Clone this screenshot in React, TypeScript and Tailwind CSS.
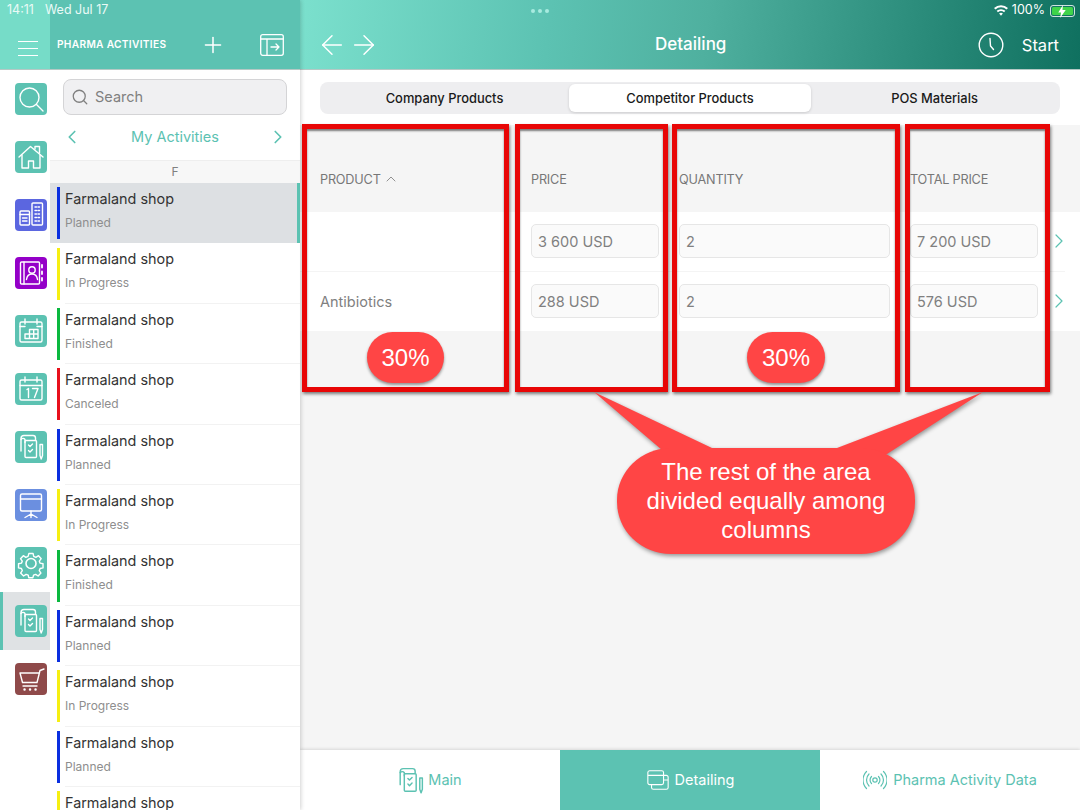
import type { ReactNode } from "react";
import { ChevronLeft, ChevronRight, ChevronUp, Plus, Search, ArrowLeft, ArrowRight } from "lucide-react";

const sans = "font-['Inter','Noto_Sans',sans-serif]";

function Glyph({ children, className = "w-8 h-8" }: { children: ReactNode; className?: string }) {
  return (
    <svg viewBox="0 0 32 32" fill="none" stroke="currentColor" strokeWidth="1.4" strokeLinecap="round" strokeLinejoin="round" className={className}>
      {children}
    </svg>
  );
}

const ClipboardGlyph = () => (
  <>
    <path d="M6 20V7.5C6 5.5 7.2 4.5 9 4.5h9c1.5 0 2.5 1 2.5 2.5v2" />
    <path d="M6 8.5c1-1.5 3-1.5 4 0v3" />
    <rect x="10" y="9.5" width="11.5" height="17" rx="1" />
    <path d="M13.5 14l1.5 1.5 2.5-2.5M13.5 19.5l1.5 1.5 2.5-2.5" />
    <path d="M25 13.5h2.5v11L26.2 28 25 24.5z" />
  </>
);

const railIcons = [
  {
    bg: "bg-[#5cc2b2]",
    glyph: (
      <>
        <circle cx="14.5" cy="14.5" r="9.5" />
        <path d="M21.5 21.5l6.5 6.5" />
      </>
    ),
  },
  {
    bg: "bg-[#5cc2b2]",
    glyph: (
      <>
        <path d="M4 16L15.5 5.5 28 16" />
        <path d="M7 14v13h6.5v-7h5v7H25V14" />
        <path d="M20 8V5.5h4.5V12" />
      </>
    ),
  },
  {
    bg: "bg-[#5b66e0]",
    glyph: (
      <>
        <rect x="5" y="12" width="9.5" height="14" rx="1" />
        <path d="M5 15.5h9.5M7.5 19h4.5M7.5 22h4.5" />
        <rect x="17" y="4" width="10.5" height="22" rx="1" />
        <path d="M20 8h4.5M20 11.5h4.5M20 15h4.5M20 18.5h4.5M20 22h4.5" strokeDasharray="1.5 1.5" />
      </>
    ),
  },
  {
    bg: "bg-[#9400c8]",
    glyph: (
      <>
        <rect x="5.5" y="5" width="19" height="22" rx="1" />
        <path d="M9 5v22" />
        <circle cx="17" cy="13" r="3.2" />
        <path d="M11.5 22.5c.5-4 2.5-5.5 5.5-5.5s5 1.5 5.5 5.5" />
        <path d="M27 8v2.5M27 14.5V17M27 21v2.5" strokeWidth="1.8" />
      </>
    ),
  },
  {
    bg: "bg-[#5cc2b2]",
    glyph: (
      <>
        <rect x="5" y="7" width="22" height="20" rx="1.5" />
        <path d="M10 4v5M22 4v5M5 11.5h5M22 11.5h5" />
        <path d="M10 23.5h13v-9h-8.5v4.5H10zM14.5 19H23M14.5 19v4.5M18.7 14.5v9" />
      </>
    ),
  },
  {
    bg: "bg-[#5cc2b2]",
    glyph: (
      <>
        <rect x="5" y="7" width="22" height="20" rx="1.5" />
        <path d="M10 4v5M22 4v5M5 12.5h22" />
        <path d="M12 16.5l1.5-1v9" />
        <path d="M17.5 15.5H23l-3.5 9" />
      </>
    ),
  },
  { bg: "bg-[#5cc2b2]", glyph: <ClipboardGlyph /> },
  {
    bg: "bg-[#6b8fe0]",
    glyph: (
      <>
        <rect x="5.5" y="5" width="21" height="17" rx="1.5" />
        <path d="M5.5 10h21M16 22v3M16 25l-6 3.5M16 25l6 3.5M16 25v3.5" />
      </>
    ),
  },
  {
    bg: "bg-[#5cc2b2]",
    glyph: (
      <>
        <path d="M13.5 4.5h5l.8 3.6 2.6 1.1 3.2-2 3.2 3.6-2.2 3 .9 2.4 3.5.8v4.9l-3.5.8-1 2.5 2 3-3.4 3.5-3-2-2.5 1-.8 3h-5l-.6-3-2.6-1-3 2-3.6-3.5 2-3-1-2.5-3.5-.8V17l3.5-.8 1-2.4-2.1-3 3.4-3.6 3 2 2.7-1.1z" transform="translate(2.7 2.7) scale(.83)" strokeWidth="1.7" />
        <circle cx="16" cy="16.5" r="5" strokeWidth="1.6" />
      </>
    ),
  },
  { bg: "bg-[#5cc2b2]", glyph: <ClipboardGlyph />, active: true },
  {
    bg: "bg-[#8f4a4a]",
    glyph: (
      <>
        <path d="M5 10h19M5 10l2.5 9.5h14.5L25 7.5 29 6" />
        <path d="M8 23h14" />
        <path d="M9.5 26.5h.1M20.5 26.5h.1M15 26.5h.1" strokeWidth="2.4" />
      </>
    ),
  },
];

const activities = [
  { status: "Planned", bar: "bg-[#0a2fe0]" },
  { status: "In Progress", bar: "bg-[#f6ef12]" },
  { status: "Finished", bar: "bg-[#0ab83f]" },
  { status: "Canceled", bar: "bg-[#e8101c]" },
  { status: "Planned", bar: "bg-[#0a2fe0]" },
  { status: "In Progress", bar: "bg-[#f6ef12]" },
  { status: "Finished", bar: "bg-[#0ab83f]" },
  { status: "Planned", bar: "bg-[#0a2fe0]" },
  { status: "In Progress", bar: "bg-[#f6ef12]" },
  { status: "Planned", bar: "bg-[#0a2fe0]" },
  { status: "", bar: "bg-[#f6ef12]" },
];

const rows = [
  { product: "", price: "3 600 USD", qty: "2", total: "7 200 USD" },
  { product: "Antibiotics", price: "288 USD", qty: "2", total: "576 USD" },
];

function ValueBox({ value }: { value: string }) {
  return (
    <div className="h-[34px] flex items-center px-[6px] pt-[1px] rounded-[5px] border border-[#e6e6e6] bg-[#fafafa] text-[14.5px] text-[#808080]">
      {value}
    </div>
  );
}

export default function App() {
  return (
    <div className={`relative w-[1080px] h-[810px] overflow-hidden flex bg-white ${sans}`}>
      {/* Sidebar */}
      <aside className="relative z-10 w-[300px] shrink-0 flex flex-col shadow-[1px_0_4px_rgba(0,0,0,0.18)]">
        <header className="h-[70px] shrink-0 flex flex-col text-white border-b border-[#b5c9c5] bg-[linear-gradient(90deg,#76dcc8_50px,#5cc2b2_50px)]">
          <div className="h-[21px] flex items-center gap-[11px] pl-[7px] text-[12.5px] text-[#eafaf6]">
            <span>14:11</span>
            <span>Wed Jul 17</span>
          </div>
          <div className="flex-1 flex items-center">
            <div className="w-[57px] mt-[6px] pl-[18px] flex flex-col gap-[6px]">
              <span className="w-[20px] h-px bg-white" />
              <span className="w-[20px] h-px bg-white" />
              <span className="w-[20px] h-px bg-white" />
            </div>
            <span className="w-[143px] text-[10.2px] font-semibold tracking-[0.3px] whitespace-nowrap">PHARMA ACTIVITIES</span>
            <Plus className="w-[26px] h-[26px]" strokeWidth={1.4} />
            <svg viewBox="0 0 24 22" fill="none" stroke="currentColor" strokeWidth="1.3" strokeLinejoin="round" strokeLinecap="round" className="ml-[34px] w-[24px] h-[22px]">
              <rect x="0.7" y="0.7" width="22.6" height="20.6" rx="2" />
              <path d="M0.7 5h22.6M7 5v16" />
              <path d="M11 13h8M16 10l3 3-3 3" />
            </svg>
          </div>
        </header>

        <div className="flex-1 flex min-h-0">
          {/* Icon rail */}
          <nav className="w-[50px] shrink-0 flex flex-col bg-white">
            {railIcons.map((item, i) => (
              <div
                key={i}
                className={`h-[58px] shrink-0 flex items-center ${item.active ? "pl-[12px] border-l-[3px] border-[#5cc2b2] bg-[#dfe2e4]" : "pl-[15px]"}`}
              >
                <div className={`w-[32px] h-[32px] rounded-[4px] text-white ${item.bg}`}>
                  <Glyph>{item.glyph}</Glyph>
                </div>
              </div>
            ))}
          </nav>

          {/* Activity list */}
          <div className="w-[250px] flex flex-col min-h-0 overflow-hidden bg-white">
            <div className="mt-[9px] mx-[13px] h-[36px] shrink-0 flex items-center gap-[6px] pl-[7px] rounded-[8px] border border-[#d4d4d6] bg-[#f0f0f2] text-[#808080]">
              <Search className="w-[18px] h-[18px]" strokeWidth={1.7} />
              <span className="text-[14.5px]">Search</span>
            </div>
            <div className="h-[45px] shrink-0 flex items-center justify-between px-[11px] pb-[2px] text-[#5cc2b2]">
              <ChevronLeft className="w-[22px] h-[22px]" strokeWidth={1.8} />
              <span className="text-[14.5px]">My Activities</span>
              <ChevronRight className="w-[22px] h-[22px]" strokeWidth={1.8} />
            </div>
            <div className="h-[23px] shrink-0 flex items-center justify-center bg-[#f7f7f7] border-t border-[#eeeeee] text-[12px] text-[#808080]">F</div>
            {activities.map((a, i) => (
              <div key={i} className={`h-[60.4px] shrink-0 flex items-center pl-[7px] ${i === 0 ? "bg-[#dde0e3] border-r-[3px] border-[#5cc2b2]" : ""}`}>
                <span className={`w-[3px] h-[52px] shrink-0 ${a.bar}`} />
                <div className={`ml-[5px] flex-1 h-full flex flex-col pt-[6px] ${i === 0 ? "" : "border-b border-[#f2f2f2]"}`}>
                  <span className="text-[14.4px] leading-[20px] text-[#333333]">Farmaland shop</span>
                  <span className="mt-[6px] text-[12px] leading-[16px] text-[#8e8e8e]">{a.status}</span>
                </div>
              </div>
            ))}
          </div>
        </div>
      </aside>

      {/* Main */}
      <main className="flex-1 flex flex-col min-w-0 bg-[#f5f5f5]">
        <header className="h-[70px] shrink-0 flex flex-col text-white bg-[linear-gradient(97deg,#7be0cd_0%,#5cc2b2_32%,#4fb09f_52%,#0f705f_100%)] border-b border-[#b5c9c5]">
          <div className="h-[21px] flex items-center">
            <div className="ml-[231px] flex gap-[3px]">
              <span className="w-[4px] h-[4px] rounded-full bg-[#a8ebe0]" />
              <span className="w-[4px] h-[4px] rounded-full bg-[#a8ebe0]" />
              <span className="w-[4px] h-[4px] rounded-full bg-[#a8ebe0]" />
            </div>
            <div className="ml-auto flex items-center gap-[4px] pr-[5px] text-[12.5px]">
              <svg viewBox="0 0 16 12" fill="white" className="w-[14px] h-[11px]">
                <path d="M8 12l-2.2-2.6a3.4 3.4 0 0 1 4.4 0zM4.5 8L3 6.3a7.7 7.7 0 0 1 10 0L11.5 8a5.4 5.4 0 0 0-7 0zM1.7 4.8L0 3a12 12 0 0 1 16 0l-1.7 1.8a9.5 9.5 0 0 0-12.6 0z" />
              </svg>
              <span>100%</span>
              <span className="relative ml-[1px] w-[25px] h-[12px] rounded-[3px] border border-white/80 p-[1px]">
                <span className="block w-full h-full rounded-[1.5px] bg-[#3fd34a]" />
                <svg viewBox="0 0 10 14" fill="white" className="absolute left-[6px] -top-[1px] w-[10px] h-[13px]">
                  <path d="M6 0L1 8h3l-1 6 6-8.5H5.5z" />
                </svg>
              </span>
            </div>
          </div>
          <div className="flex-1 flex items-center pl-[16px] pr-[21px]">
            <ArrowLeft className="w-[32px] h-[32px]" strokeWidth={1.1} />
            <ArrowRight className="w-[32px] h-[32px]" strokeWidth={1.1} />
            <span className="ml-[275px] text-[17px] font-medium">Detailing</span>
            <svg viewBox="0 0 26 26" fill="none" stroke="currentColor" strokeWidth="1.4" strokeLinecap="round" className="ml-auto w-[26px] h-[26px]">
              <circle cx="13" cy="13" r="11.8" />
              <path d="M12 6.5l.5 7.5 3 3.5" />
            </svg>
            <span className="ml-[18px] text-[16.5px]">Start</span>
          </div>
        </header>

        <div className="h-[55px] shrink-0 bg-white flex items-start px-[20px] pt-[12px]">
          <div className="w-[740px] h-[32px] rounded-[8px] bg-[#eeeef0] grid grid-cols-[247px_242px_1fr] items-center p-[2px] text-[12.9px] font-medium text-[#1a1a1a]">
            <div className="text-center -ml-[2px] pt-[1px]">Company Products</div>
            <div className="h-[28px] pt-[1px] flex items-center justify-center rounded-[6px] bg-white shadow-[0_1px_3px_rgba(0,0,0,0.15)]">Competitor Products</div>
            <div className="text-center pt-[1px]">POS Materials</div>
          </div>
        </div>

        <div className="h-[87px] shrink-0 grid grid-cols-[191px_128px_211px_128px_1fr] gap-x-[20px] pl-[20px] items-center text-[12.7px] text-[#777777] tracking-[-0.2px] pt-[44px] pb-[22px]">
          <div className="flex items-center gap-[2px]">PRODUCT <ChevronUp className="w-[16px] h-[16px]" strokeWidth={1.2} /></div>
          <div>PRICE</div>
          <div>QUANTITY</div>
          <div>TOTAL PRICE</div>
        </div>

        {rows.map((r, i) => (
          <div key={i} className="h-[59.5px] shrink-0 bg-white">
            <div className={`h-full w-[765px] grid grid-cols-[191px_128px_211px_128px_1fr] gap-x-[20px] pl-[20px] items-center ${i === 0 ? "border-b border-[#f4f4f4]" : ""}`}>
              <span className="pt-[1px] text-[14.5px] text-[#808080]">{r.product}</span>
              <ValueBox value={r.price} />
              <ValueBox value={r.qty} />
              <ValueBox value={r.total} />
              <ChevronRight className="-ml-[11px] w-[24px] h-[24px] text-[#5cc2b2]" strokeWidth={1.2} />
            </div>
          </div>
        ))}

        <div className="flex-1" />

        <nav className="h-[60px] shrink-0 grid grid-cols-3 bg-white text-[14.5px] text-[#5cc2b2] shadow-[0_-1px_3px_rgba(0,0,0,0.12)]">
          <div className="flex items-center justify-center gap-[1px] pr-[4px]">
            <Glyph className="w-[33px] h-[33px]"><ClipboardGlyph /></Glyph>
            <span>Main</span>
          </div>
          <div className="flex items-center justify-center gap-[5px] bg-[#5cc2b2] text-white">
            <svg viewBox="0 0 24 26" fill="none" stroke="currentColor" strokeWidth="1.2" strokeLinejoin="round" className="w-[24px] h-[24px]">
              <rect x="1" y="3" width="17" height="15" rx="2" />
              <path d="M1 8h17M5 18v3a2 2 0 0 0 2 2h14a2 2 0 0 0 2-2V10a2 2 0 0 0-2-2h-3M18 13h5" />
            </svg>
            <span>Detailing</span>
          </div>
          <div className="flex items-center justify-center gap-[6px]">
            <svg viewBox="0 0 24 24" fill="none" stroke="currentColor" strokeWidth="1.2" strokeLinecap="round" className="w-[24px] h-[24px]">
              <circle cx="12" cy="12" r="2.2" />
              <path d="M8.5 8.5a5 5 0 0 0 0 7M15.5 8.5a5 5 0 0 1 0 7M6 6a8.500 8.500 0 0 0 0 12M18 6a8.500 8.500 0 0 1 0 12M3.5 3.5a12 12 0 0 0 0 17M20.5 3.5a12 12 0 0 1 0 17" />
            </svg>
            <span>Pharma Activity Data</span>
          </div>
        </nav>
      </main>

      {/* Annotation layer drawn over the screenshot */}
      <div className="absolute left-[302px] top-[124px] w-[207px] h-[268px] border-[5px] border-[#e80606] z-20 shadow-[1px_2px_3px_rgba(0,0,0,0.5),inset_0_2px_2px_rgba(0,0,0,0.5)]" />
      <div className="absolute left-[515px] top-[124px] w-[153px] h-[268px] border-[5px] border-[#e80606] z-20 shadow-[1px_2px_3px_rgba(0,0,0,0.5),inset_0_2px_2px_rgba(0,0,0,0.5)]" />
      <div className="absolute left-[672px] top-[124px] w-[228px] h-[268px] border-[5px] border-[#e80606] z-20 shadow-[1px_2px_3px_rgba(0,0,0,0.5),inset_0_2px_2px_rgba(0,0,0,0.5)]" />
      <div className="absolute left-[905px] top-[124px] w-[145px] h-[268px] border-[5px] border-[#e80606] z-20 shadow-[1px_2px_3px_rgba(0,0,0,0.5),inset_0_2px_2px_rgba(0,0,0,0.5)]" />

      <div className="absolute left-[367px] top-[332px] w-[77px] h-[51px] rounded-full bg-[#ff4545] z-30 flex items-center justify-center text-white text-[24px] font-['Liberation_Sans',sans-serif] shadow-[0_2px_3px_rgba(0,0,0,0.4)]">30%</div>
      <div className="absolute left-[747px] top-[332px] w-[78px] h-[51px] rounded-full bg-[#ff4545] z-30 flex items-center justify-center text-white text-[24px] font-['Liberation_Sans',sans-serif] shadow-[0_2px_3px_rgba(0,0,0,0.4)]">30%</div>

      <svg viewBox="590 390 400 170" className="absolute left-[590px] top-[390px] w-[400px] h-[170px] z-30 drop-shadow-[1px_2px_2px_rgba(0,0,0,0.4)]">
        <path d="M662 450 L594 392 L712 448 H837 L983 392 L887 454 H662 Z" fill="#ff4545" />
        <rect x="617" y="448" width="298" height="106" rx="54" ry="52" fill="#ff4545" />
      </svg>
      <div className="absolute left-[617px] top-[457px] w-[298px] z-30 text-center text-white text-[24px] leading-[29px] font-['Liberation_Sans',sans-serif]">
        The rest of the area
        <br />
        divided equally among
        <br />
        columns
      </div>
    </div>
  );
}
